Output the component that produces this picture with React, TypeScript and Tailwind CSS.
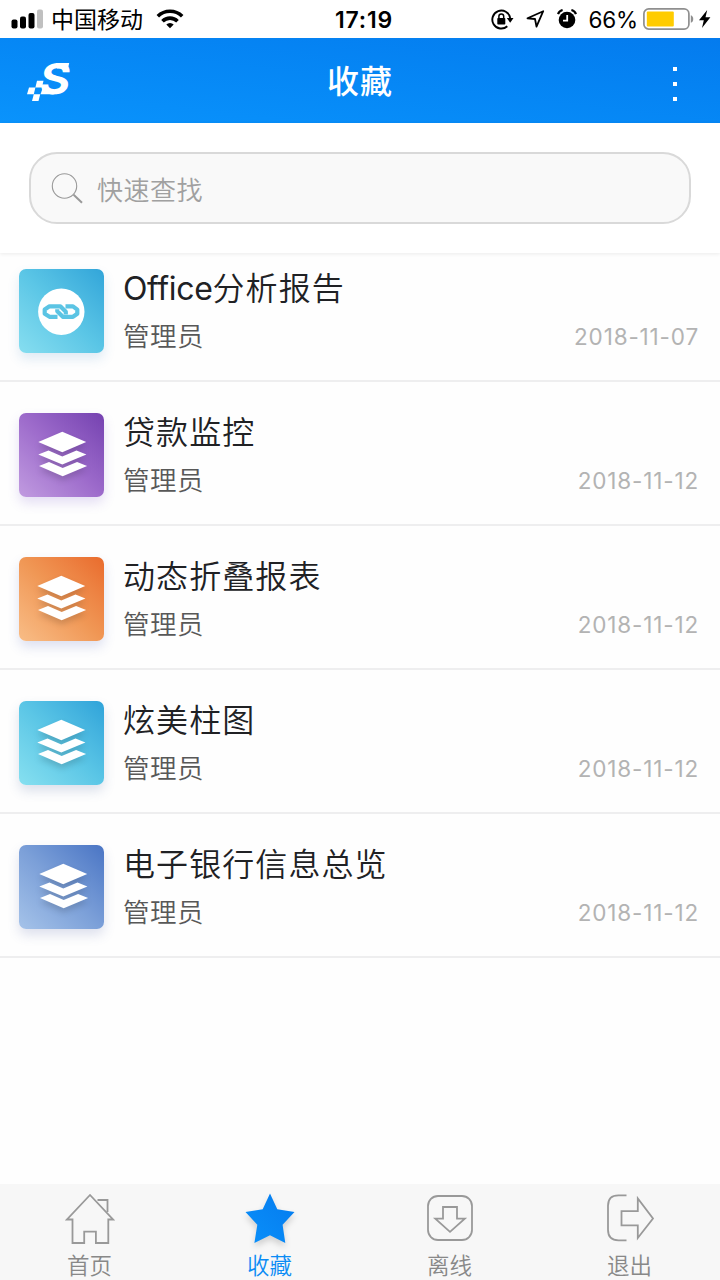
import React from 'react';
import clsx from 'clsx';

type Report = {
  prefix?: string;
  title: string;
  owner: string;
  date: string;
  icon: 'link' | 'layers';
  tile: string;
  shift?: string;
};

const reports: Report[] = [
  {
    prefix: 'Office',
    title: '分析报告',
    owner: '管理员',
    date: '2018-11-07',
    icon: 'link',
    tile: 'from-[#86def0] via-[#5bc6e6] to-[#31a5d9] shadow-[0_6px_12px_rgba(60,130,190,0.16)]',
  },
  {
    title: '贷款监控',
    owner: '管理员',
    date: '2018-11-12',
    icon: 'layers',
    tile: 'from-[#c19be0] via-[#9d6bcb] to-[#7541b0] shadow-[0_6px_12px_rgba(110,80,200,0.18)]',
    shift: 'translate-x-px',
  },
  {
    title: '动态折叠报表',
    owner: '管理员',
    date: '2018-11-12',
    icon: 'layers',
    tile: 'from-[#f8bd86] via-[#f09755] to-[#e96b2c] shadow-[0_6px_12px_rgba(70,90,180,0.18)]',
  },
  {
    title: '炫美柱图',
    owner: '管理员',
    date: '2018-11-12',
    icon: 'layers',
    tile: 'from-[#86e0f0] via-[#5bc6e6] to-[#2ea3d9] shadow-[0_6px_12px_rgba(60,90,150,0.18)]',
  },
  {
    title: '电子银行信息总览',
    owner: '管理员',
    date: '2018-11-12',
    icon: 'layers',
    tile: 'from-[#a5c3e9] via-[#7b9fd8] to-[#4a75c4] shadow-[0_6px_12px_rgba(70,90,160,0.18)]',
    shift: 'translate-x-[2px]',
  },
];

function StatusBar() {
  return (
    <div className="grid h-[38px] shrink-0 grid-cols-[1fr_auto_1fr] items-center bg-white text-black">
      <div className="flex items-center pl-[11px]">
        <svg width="32" height="20" viewBox="0 0 32 20">
          <rect x="0.5" y="10.5" width="6" height="9" rx="2" />
          <rect x="9" y="7.5" width="6" height="12" rx="2" />
          <rect x="17.5" y="4" width="6" height="15.500" rx="2" />
          <rect x="26" y="0.500" width="6" height="19" rx="2" fill="#c0c0c0" />
        </svg>
        <span className="ml-[8px] pt-[2px] text-[23px] leading-[36px]">中国移动</span>
        <svg className="ml-[13px]" width="28" height="20" viewBox="0 0 28 20" fill="none" stroke="#000" strokeWidth="3.6">
          <path d="M1.800 7.200a17.400 17.400 0 0 1 24.400 0" />
          <path d="M6.500 12.200a10.600 10.600 0 0 1 15 0" />
          <path d="M10.300 15.600L14 19.300l3.700-3.700a5.200 5.200 0 0 0-7.400 0z" fill="#000" stroke="none" />
        </svg>
      </div>
      <div className="pl-[8px] pt-[2px] text-[23px] font-semibold leading-[36px] tracking-[0.800px]">17:19</div>
      <div className="flex items-center justify-end pr-[9px]">
        <svg width="24" height="21" viewBox="0 0 24 21" fill="none" stroke="#000" strokeWidth="1.9">
          <path d="M16.300 17.300A9 9 0 1 1 19.200 9" />
          <path d="M15.800 9h6.700l-3.300 4.800z" fill="#000" stroke="none" />
          <rect x="6.300" y="9" width="8" height="6.500" rx="0.800" fill="#000" stroke="none" />
          <path d="M7.900 9.500V7.300a2.400 2.400 0 0 1 4.800 0v2.200" strokeWidth="1.500" />
        </svg>
        <svg className="ml-[11px]" width="19" height="18" viewBox="0 0 19 18" fill="none" stroke="#000" strokeWidth="1.800" strokeLinejoin="round">
          <path d="M1.500 8.300L17.200 1.200 10.500 16.600 9 9z" />
        </svg>
        <svg className="ml-[12px]" width="20" height="20" viewBox="0 0 20 20">
          <circle cx="10" cy="11" r="8.300" />
          <path d="M1 5.200Q2.200 1.800 5.600 1M19 5.200Q17.800 1.800 14.400 1" fill="none" stroke="#000" strokeWidth="2.200" />
          <path d="M10.200 6v5.600H6" fill="none" stroke="#fff" strokeWidth="1.800" />
        </svg>
        <span className="ml-[12px] pt-[2px] text-[22.500px] leading-[36px] tracking-[-0.200px]">66%</span>
        <svg className="ml-[5px]" width="52" height="22" viewBox="0 0 52 22">
          <rect x="0.900" y="0.900" width="45" height="20.200" rx="4.800" fill="#fff" stroke="#8f8f8f" strokeWidth="1.700" />
          <rect x="3.800" y="3.500" width="27" height="15" rx="1" fill="#ffcc00" />
          <path d="M47.800 7.200c3.300 1 3.300 6.600 0 7.600z" fill="#8f8f8f" />
        </svg>
        <svg className="ml-[4px]" width="12" height="18" viewBox="0 0 12 18">
          <path d="M8.200 0L0 10.300h4.800L3 18 11.400 7.300H6.500z" />
        </svg>
      </div>
    </div>
  );
}

function Logo() {
  return (
    <svg className="overflow-visible" width="46" height="42" viewBox="0 0 46 42" fill="#fff">
      <text
        transform="matrix(1 0 -0.150 1 13 34)"
        fontFamily="Inter, sans-serif"
        fontWeight="700"
        fontSize="42"
        textLength="30.500"
        lengthAdjust="spacingAndGlyphs"
      >
        S
      </text>
      <path d="M17.500 28.500h8l3 5.700H15.500z" />
      <path d="M31 2.900h13.200l-1.200 5.600H32z" />
      <path d="M12 20.800h6.500l-1.600 6.700h-6.500zM4 27.500h6.400L8.800 34.200H2zM8.800 34.200h6.400L13.500 41H7z" />
    </svg>
  );
}

function Header() {
  return (
    <header className="grid h-[85px] shrink-0 grid-cols-[1fr_auto_1fr] items-center bg-linear-to-tr from-[#0a93fc] to-[#047bee] text-white">
      <div className="pl-[25px]">
        <Logo />
      </div>
      <h1 className="pt-[2px] text-[32px] font-medium leading-[48px] tracking-[1px]">收藏</h1>
      <div className="flex justify-end pr-[43px]">
        <button className="flex flex-col gap-[11px] pt-[6px]" aria-label="menu">
          <span className="size-1 bg-white" />
          <span className="size-1 bg-white" />
          <span className="size-1 bg-white" />
        </button>
      </div>
    </header>
  );
}

function SearchBar() {
  return (
    <div className="h-[130px] shrink-0 bg-white px-[29px] pt-[29px] shadow-[0_1px_4px_rgba(0,0,0,0.08)]">
      <div className="flex h-[72px] items-center rounded-[28px] border-2 border-[#d9d9d9] bg-[#f9f9f9] pl-[20px]">
        <svg width="33" height="33" viewBox="0 0 33 33" fill="none" stroke="#999">
          <circle cx="13.500" cy="14" r="12.200" strokeWidth="1.100" />
          <path d="M22.600 22.700l8.400 8" strokeWidth="2" />
        </svg>
        <span className="ml-[13px] pt-[4px] text-[26px] font-[350] tracking-[0.500px] text-[#a0a0a0]">快速查找</span>
      </div>
    </div>
  );
}

function LinkIcon() {
  return (
    <svg width="85" height="84" viewBox="0 0.500 85 84" fill="none" stroke="#5bc4e4" strokeWidth="4.200" strokeLinejoin="round">
      <circle cx="42.300" cy="43.200" r="23.200" fill="#fff" stroke="none" />
      <path d="M38.500 48.300H30.500l-4.800-3v-4.200l4.800-3.300h10.800l5.500 5.500v2.800" />
      <path d="M46.500 37.800h7.500l4.300 3.300v4.200l-4.300 3H43.800l-5.500-5.500v-2" />
    </svg>
  );
}

function LayersIcon({ className }: { className?: string }) {
  return (
    <svg
      className={clsx('drop-shadow-[0_4px_3px_rgba(0,0,0,0.16)]', className)}
      width="85"
      height="84"
      viewBox="0 0.700 85 84"
      fill="#fff"
    >
      <path d="M42.300 19.500L66.200 29.700 42.300 40 18.300 29.700z" />
      <path d="M18.300 42.300l10.200-4.200 13.800 6 14.200-6 9.900 4.200-24.100 10z" />
      <path d="M19 53.800l10-4.200 13.700 6 14.400-6 10 4.200-24.400 10.100z" />
    </svg>
  );
}

function ReportRow({ report }: { report: Report }) {
  return (
    <li className="flex h-[144px] items-end border-b-2 border-[#eeeeef] pb-[27px] pl-[19px] pr-[21px] first:h-[129px]">
      <div className={clsx('h-[84px] w-[85px] shrink-0 rounded-[7px] bg-linear-to-tr', report.tile)}>
        {report.icon === 'link' ? <LinkIcon /> : <LayersIcon className={report.shift} />}
      </div>
      <div className="ml-[19px] flex h-[85px] flex-1 flex-col">
        <h2 className="-mt-[3px] text-[32px] font-[350] leading-[48px] tracking-[1.080px] text-[#202124]">
          {report.prefix && <span className="font-normal tracking-[-0.350px]">{report.prefix}</span>}
          {report.title}
        </h2>
        <div className="flex items-center justify-between leading-[48px]">
          <span className="-mt-[2px] text-[26.500px] font-[350] tracking-[0.500px] text-[#585858]">{report.owner}</span>
          <span className="text-[22.500px] tracking-[0.850px] text-[#b3b3b3]">{report.date}</span>
        </div>
      </div>
    </li>
  );
}

function HomeIcon() {
  return (
    <svg width="50" height="52" viewBox="0 0 50 52" fill="none" stroke="#999" strokeWidth="1.800">
      <path d="M25 2L2 26.500h5.500V50h11.700V38.700h11.700V50h12.400V26.500H48z" />
      <path d="M32.500 7h10v12" />
    </svg>
  );
}

function StarIcon() {
  return (
    <svg
      className="drop-shadow-[0_4px_3px_rgba(0,0,0,0.16)]"
      width="50"
      height="52"
      viewBox="0 0 50 52"
    >
      <defs>
        <linearGradient id="star" x1="0" y1="1" x2="1" y2="0">
          <stop offset="0" stopColor="#0a90fa" />
          <stop offset="1" stopColor="#047bee" />
        </linearGradient>
      </defs>
      <path fill="url(#star)" d="M25 0.500l7.300 15.800 17.200 2.600-11.900 12.800L40.300 50 25 42.300 9.400 50l2.900-18.300L0.500 18.900l17.200-2.600z" />
    </svg>
  );
}

function OfflineIcon() {
  return (
    <svg width="50" height="52" viewBox="0 0 50 52" fill="none" stroke="#999" strokeWidth="1.800">
      <rect x="3" y="3" width="44" height="44" rx="10" />
      <path d="M18 14h14v11.700h7.800L25 38.800 10.300 25.700H18z" />
    </svg>
  );
}

function ExitIcon() {
  return (
    <svg width="50" height="52" viewBox="0 0 50 52" fill="none" stroke="#999" strokeWidth="1.800">
      <path d="M21.500 2.300H13.500Q3 2.300 3 12.800V36.800Q3 47.300 13.500 47.300h8" />
      <path d="M16.500 18.200h16.300V5.500L48 25.500 32.800 45V32.300H16.500z" />
    </svg>
  );
}

const tabs = [
  { label: '首页', Icon: HomeIcon },
  { label: '收藏', Icon: StarIcon, active: true },
  { label: '离线', Icon: OfflineIcon },
  { label: '退出', Icon: ExitIcon },
];

function TabBar() {
  return (
    <nav className="grid h-[96px] shrink-0 grid-cols-4 bg-[#f7f7f7]">
      {tabs.map(({ label, Icon, active }) => (
        <div key={label} className="flex flex-col items-center pt-[9px]">
          <Icon />
          <span
            className={clsx(
              'mt-[6px] pr-px text-[22.500px] font-[350] leading-[30px]',
              active ? 'text-[#0c8cf5]' : 'text-[#888888]'
            )}
          >
            {label}
          </span>
        </div>
      ))}
    </nav>
  );
}

export default function App() {
  return (
    <div className="flex h-[1280px] w-[720px] flex-col overflow-hidden bg-[#fefefe] font-[Inter,'Noto_Sans_CJK_SC',sans-serif]">
      <StatusBar />
      <Header />
      <SearchBar />
      <ul className="flex-1">
        {reports.map((report) => (
          <ReportRow key={report.title} report={report} />
        ))}
      </ul>
      <TabBar />
    </div>
  );
}
